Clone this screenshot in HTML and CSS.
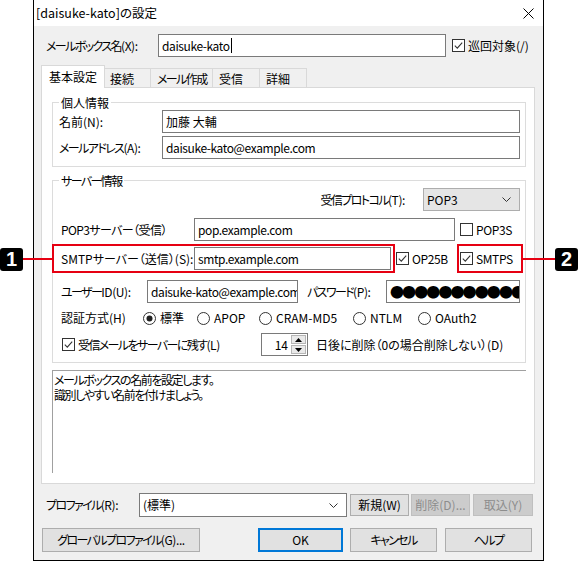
FILE: index.html
```html
<!DOCTYPE html>
<html lang="ja">
<head>
<meta charset="utf-8">
<title>[daisuke-kato]の設定</title>
<link rel="stylesheet" href="styles.css">
</head>
<body>
<div class="dialog">
  <div class="titlebar">
    <span class="title">[daisuke-kato]の設定</span>
    <svg class="close" width="11" height="11" viewBox="0 0 11 11"><path d="M0.5 0.5 L10.5 10.5 M10.5 0.5 L0.5 10.5" stroke="#000" stroke-width="1" fill="none"/></svg>
  </div>

  <div class="mailbox">
    <span class="lbl lbl-mailbox"><span class="kn">メールボックス名</span><span class="lat">(X):</span></span>
    <div class="input in-mailbox"><span class="lat">daisuke-kato</span><span class="caret"></span></div>
    <div class="check ml6">
      <svg class="cb" viewBox="0 0 13 13"><rect x="0.5" y="0.5" width="12" height="12" fill="#fff" stroke="#333"/><path d="M2.8 6.6 L5.3 9.1 L10.2 3.6" fill="none" stroke="#333" stroke-width="1.1"/></svg>
      <span>巡回対象(/)</span>
    </div>
  </div>

  <div class="tabs">
    <div class="tab active">基本設定</div>
    <div class="tab tab-s">接続</div>
    <div class="tab tab-l kn">メール作成</div>
    <div class="tab tab-m">受信</div>
    <div class="tab tab-m">詳細</div>
  </div>

  <div class="panel">
    <fieldset class="group g1">
      <legend>個人情報</legend>
      <div class="frow">
        <span class="lbl lbl-g1">名前(N):</span>
        <div class="input in-g1">加藤 大輔</div>
      </div>
      <div class="frow mt3">
        <span class="lbl lbl-g1"><span class="kn">メールアドレス</span><span class="lat">(A):</span></span>
        <div class="input in-g1"><span class="lat">daisuke-kato@example.com</span></div>
      </div>
    </fieldset>

    <fieldset class="group g2">
      <legend class="kn">サーバー情報</legend>
      <div class="frow proto">
        <span class="lbl"><span class="kn">受信プロトコル</span><span class="lat">(T):</span></span>
        <div class="select gray">
          <span>POP3</span>
          <svg class="chev" width="9" height="5" viewBox="0 0 9 5"><path d="M0.5 0.5 L4.5 4.5 L8.5 0.5" fill="none" stroke="#333"/></svg>
        </div>
      </div>
      <div class="frow mt7">
        <span class="lbl lbl-srv kn2">POP3サーバー（受信）</span>
        <div class="input in-pop"><span class="lat">pop.example.com</span></div>
        <div class="check ml5">
          <svg class="cb" viewBox="0 0 13 13"><rect x="0.5" y="0.5" width="12" height="12" fill="#fff" stroke="#333"/></svg>
          <span class="lat">POP3S</span>
        </div>
      </div>
      <div class="frow mt6">
        <span class="lbl lbl-srv">SMTPサーバー（送信）(S):</span>
        <div class="input in-smtp"><span class="lat">smtp.example.com</span></div>
        <div class="check ml5 op25b">
          <svg class="cb" viewBox="0 0 13 13"><rect x="0.5" y="0.5" width="12" height="12" fill="#fff" stroke="#333"/><path d="M2.8 6.6 L5.3 9.1 L10.2 3.6" fill="none" stroke="#333" stroke-width="1.1"/></svg>
          <span class="lat">OP25B</span>
        </div>
        <div class="check">
          <svg class="cb" viewBox="0 0 13 13"><rect x="0.5" y="0.5" width="12" height="12" fill="#fff" stroke="#333"/><path d="M2.8 6.6 L5.3 9.1 L10.2 3.6" fill="none" stroke="#333" stroke-width="1.1"/></svg>
          <span class="lat">SMTPS</span>
        </div>
      </div>
      <div class="frow mt10">
        <span class="lbl lbl-user"><span class="kn">ユーザー</span><span class="lat">ID(U):</span></span>
        <div class="input in-user"><span class="lat">daisuke-kato@example.com</span></div>
        <span class="lbl lbl-pass"><span class="kn">パスワード</span><span class="lat">(P):</span></span>
        <div class="input in-pass"><span class="dots">●●●●●●●●●●●●</span></div>
      </div>
      <div class="frow auth">
        <span class="lbl lbl-auth">認証方式(H)</span>
        <div class="radio r1">
          <svg class="rb" viewBox="0 0 13 13"><circle cx="6.5" cy="6.5" r="6" fill="#fff" stroke="#333"/><circle cx="6.5" cy="6.5" r="3" fill="#222"/></svg>
          <span>標準</span>
        </div>
        <div class="radio r2">
          <svg class="rb" viewBox="0 0 13 13"><circle cx="6.5" cy="6.5" r="6" fill="#fff" stroke="#333"/></svg>
          <span>APOP</span>
        </div>
        <div class="radio r3">
          <svg class="rb" viewBox="0 0 13 13"><circle cx="6.5" cy="6.5" r="6" fill="#fff" stroke="#333"/></svg>
          <span>CRAM-MD5</span>
        </div>
        <div class="radio r4">
          <svg class="rb" viewBox="0 0 13 13"><circle cx="6.5" cy="6.5" r="6" fill="#fff" stroke="#333"/></svg>
          <span>NTLM</span>
        </div>
        <div class="radio">
          <svg class="rb" viewBox="0 0 13 13"><circle cx="6.5" cy="6.5" r="6" fill="#fff" stroke="#333"/></svg>
          <span>OAuth2</span>
        </div>
      </div>
      <div class="frow keep">
        <div class="check keepchk">
          <svg class="cb" viewBox="0 0 13 13"><rect x="0.5" y="0.5" width="12" height="12" fill="#fff" stroke="#333"/><path d="M2.8 6.6 L5.3 9.1 L10.2 3.6" fill="none" stroke="#333" stroke-width="1.1"/></svg>
          <span><span class="kn">受信メールをサーバーに残す</span><span class="lat">(L)</span></span>
        </div>
        <div class="spin">
          <span class="spin-val">14</span>
          <div class="spin-btns">
            <div class="spin-btn"><svg width="7" height="4" viewBox="0 0 7 4"><path d="M3.5 0 L7 4 L0 4 Z" fill="#000"/></svg></div>
            <div class="spin-btn"><svg width="7" height="4" viewBox="0 0 7 4"><path d="M0 0 L7 0 L3.5 4 Z" fill="#000"/></svg></div>
          </div>
        </div>
        <span class="lbl days">日後に削除（0の場合削除しない）(D)</span>
      </div>
    </fieldset>

    <div class="memo">メールボックスの名前を設定します。<br>識別しやすい名前を付けましょう。</div>
  </div>

  <div class="profile-row">
    <span class="lbl lbl-profile"><span class="kn">プロファイル</span><span class="lat">(R):</span></span>
    <div class="select white sel-profile">
      <span>(標準)</span>
      <svg class="chev" width="9" height="5" viewBox="0 0 9 5"><path d="M0.5 0.5 L4.5 4.5 L8.5 0.5" fill="none" stroke="#333"/></svg>
    </div>
    <div class="btn sbtn b-new">新規(W)</div>
    <div class="btn sbtn disabled b-del">削除(D)...</div>
    <div class="btn sbtn disabled b-imp">取込(Y)</div>
  </div>

  <div class="button-row">
    <div class="btn b-global"><span class="kn">グローバルプロファイル</span><span class="lat">(G)...</span></div>
    <div class="btn b-ok">OK</div>
    <div class="btn b-cancel kn">キャンセル</div>
    <div class="btn b-help kn">ヘルプ</div>
  </div>
</div>

<div class="hl hl1"></div>
<div class="hl hl2"></div>
<div class="leader ld1"></div>
<div class="leader ld2"></div>
<div class="badge bd1">1</div>
<div class="badge bd2">2</div>
</body>
</html>
```

FILE: styles.css
```css
* { box-sizing: border-box; }

body {
  margin: 0;
  width: 579px;
  height: 561px;
  position: relative;
  overflow: hidden;
  background: #fff;
  color: #000;
  font-family: "Noto Sans CJK JP", sans-serif;
  font-size: 12px;
  line-height: 16px;
  font-feature-settings: "palt";
}

/* width tuning: kana-heavy labels are condensed like Meiryo UI */
.kn { letter-spacing: -1.6px; }
.kn2 { letter-spacing: -0.6px; }
.lat { letter-spacing: -0.4px; }

.dialog {
  margin-left: 33px;
  width: 511px;
  height: 561px;
  border: 1px solid #000;
  border-top: none;
  background: #f0f0f0;
  display: flex;
  flex-direction: column;
}

.titlebar {
  height: 26px;
  flex: none;
  background: #fff;
  display: flex;
  align-items: center;
  justify-content: space-between;
  padding: 0 9px 0 2px;
}
.title { font-size: 12.5px; }
.close { display: block; }

.lbl { white-space: nowrap; flex: none; }

.input {
  height: 23px;
  flex: none;
  background: #fff;
  border: 1px solid #7a7a7a;
  padding: 0 3px;
  line-height: 21px;
  white-space: nowrap;
  overflow: hidden;
  display: flex;
  align-items: center;
}
.caret {
  display: inline-block;
  width: 1px;
  height: 15px;
  background: #000;
  margin-left: 1px;
}

.check, .radio {
  display: flex;
  align-items: center;
  gap: 3px;
  flex: none;
  white-space: nowrap;
}
.cb, .rb { width: 13px; height: 13px; flex: none; display: block; }
.radio { gap: 4px; }
.ml5 { margin-left: 5px; }
.ml6 { margin-left: 6px; }
.mt3 { margin-top: 3px; }
.mt6 { margin-top: 6px; }
.mt7 { margin-top: 7px; }
.mt10 { margin-top: 10px; }

/* mailbox row */
.mailbox {
  display: flex;
  align-items: center;
  height: 23px;
  margin-top: 8px;
  padding-left: 12px;
  flex: none;
}
.lbl-mailbox { width: 112px; }
.in-mailbox { width: 288px; }

/* tabs */
.tabs {
  display: flex;
  align-items: flex-end;
  height: 22px;
  margin: 8px 0 0 7px;
  flex: none;
}
.tab {
  height: 19px;
  border: 1px solid #d9d9d9;
  border-left: none;
  border-bottom: none;
  background: #f0f0f0;
  padding-left: 5px;
  line-height: 19px;
  white-space: nowrap;
  overflow: hidden;
}
.tab.active {
  width: 64px;
  height: 23px;
  border-left: 1px solid #d9d9d9;
  background: #fff;
  margin-bottom: -1px;
  padding-left: 7px;
  line-height: 21px;
  position: relative;
  z-index: 1;
}
.tab-s { width: 46px; }
.tab-m { width: 47px; padding-left: 6px; }
.tab-l { width: 62px; padding-left: 6px; }

/* panel */
.panel {
  margin-left: 7px;
  width: 494px;
  height: 397px;
  flex: none;
  border: 1px solid #d9d9d9;
  background: #fff;
  display: flex;
  flex-direction: column;
  padding: 0 8px 10px 10px;
}

.group {
  margin: 0;
  min-width: 0;
  border: 1px solid #dcdcdc;
  padding: 0 5px 7px 6px;
  flex: none;
}
.group legend {
  padding: 0 2px;
  line-height: 15px;
}
.g1 { margin-top: 7px; }
.g2 { margin-top: 6px; padding-bottom: 6px; }
.g2 .frow { padding-left: 2px; }

.frow {
  display: flex;
  align-items: center;
  height: 23px;
}
.lbl-g1 { width: 103px; }
.in-g1 { width: 358px; }

.proto { justify-content: flex-end; gap: 18px; }

.select {
  height: 23px;
  border: 1px solid #adadad;
  display: flex;
  align-items: center;
  justify-content: space-between;
  padding: 0 8px 0 3px;
  flex: none;
}
.select.gray { background: #e5e5e5; width: 97px; }
.select.white { background: #fff; border-color: #7a7a7a; }
.chev { display: block; }

.lbl-srv { width: 133px; }
.in-pop { width: 261px; }
.in-smtp { width: 197px; }
.op25b { width: 64px; }

.lbl-user { width: 86px; }
.in-user { width: 151px; }
.lbl-pass { width: 79px; margin-left: 9px; }
.in-pass { width: 134px; padding-left: 3px; }
.dots {
  font-size: 14px;
  letter-spacing: -1.9px;
  line-height: 21px;
}

.auth { height: 22px; margin-top: 4px; }
.lbl-auth { width: 82px; }
.r1 { width: 54px; }
.r2 { width: 62px; }
.r3 { width: 94px; }
.r4 { width: 65px; }

.keep { margin-top: 4px; }
.keepchk { width: 200px; padding-left: 1px; }
.spin {
  width: 47px;
  height: 23px;
  flex: none;
  border: 1px solid #7a7a7a;
  background: #fff;
  display: flex;
  align-items: center;
  justify-content: flex-end;
  padding-right: 1px;
}
.spin-val { margin-right: 3px; }
.spin-btns {
  display: flex;
  flex-direction: column;
  gap: 1px;
}
.spin-btn {
  width: 15px;
  height: 9px;
  background: #e9e9e9;
  border: 1px solid #b5b5b5;
  display: flex;
  align-items: center;
  justify-content: center;
}
.spin-btn svg { display: block; }
.days { margin-left: 8px; }

.memo {
  margin-top: 7px;
  flex: 1;
  border-top: 1px solid #a0a0a0;
  border-left: 1px solid #a0a0a0;
  padding: 1px 1px;
  line-height: 15px;
  letter-spacing: -1.4px;
}

/* profile row */
.profile-row {
  display: flex;
  align-items: center;
  height: 24px;
  margin-top: 9px;
  padding-left: 12px;
  flex: none;
}
.lbl-profile { width: 93px; }
.sel-profile { width: 208px; height: 24px; }

.btn {
  height: 24px;
  flex: none;
  background: #e1e1e1;
  border: 1px solid #adadad;
  display: flex;
  align-items: center;
  justify-content: center;
  white-space: nowrap;
}
.sbtn { height: 22px; }
.btn.disabled {
  background: #cccccc;
  border-color: #bfbfbf;
  color: #8d8d8d;
}
.b-new { width: 59px; margin-left: 3px; }
.b-del { width: 59px; margin-left: 2px; }
.b-imp { width: 60px; margin-left: 3px; }

.button-row {
  display: flex;
  align-items: center;
  height: 24px;
  margin-top: 11px;
  padding-left: 8px;
  flex: none;
}
.b-global { width: 158px; }
.b-ok { width: 85px; margin-left: 58px; border: 2px solid #0078d7; }
.b-cancel { width: 87px; margin-left: 7px; }
.b-help { width: 87px; margin-left: 8px; }

/* annotations */
.hl {
  position: absolute;
  top: 244px;
  height: 29px;
  border: 2px solid #e60012;
}
.hl1 { left: 52px; width: 343px; }
.hl2 { left: 457px; width: 66px; }
.leader {
  position: absolute;
  top: 258px;
  height: 2px;
  background: #e60012;
}
.ld1 { left: 23px; width: 29px; }
.ld2 { left: 523px; width: 32px; }
.badge {
  position: absolute;
  top: 248px;
  width: 23px;
  height: 23px;
  border-radius: 3px;
  background: #000;
  color: #fff;
  font-family: "Liberation Sans", sans-serif;
  font-weight: bold;
  font-size: 20px;
  line-height: 23px;
  text-align: center;
}
.bd1 { left: 0px; }
.bd2 { left: 555px; }
```
